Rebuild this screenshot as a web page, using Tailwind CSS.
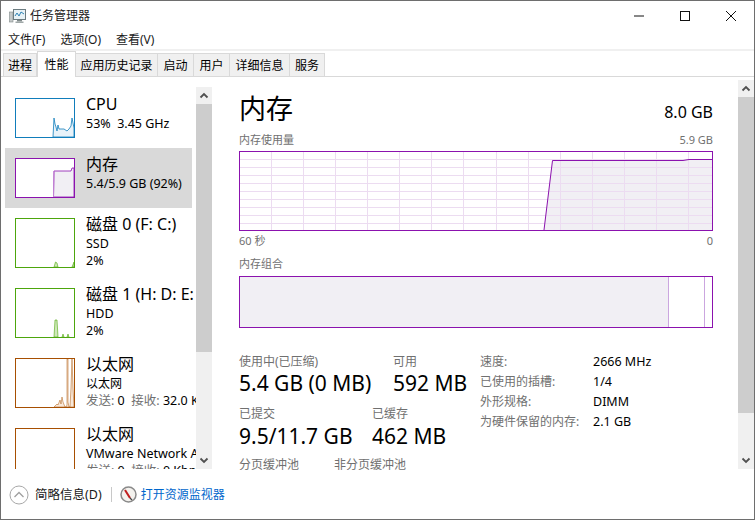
<!DOCTYPE html>
<html lang="zh-CN">
<head>
<meta charset="UTF-8">
<title>任务管理器</title>
<script src="https://cdn.jsdelivr.net/npm/@tailwindcss/browser@4"></script>
</head>
<body class="bg-white">
<div class="flex h-[520px] w-[755px] flex-col overflow-hidden border border-[#6e6e6e] bg-white font-['Noto_Sans','Noto_Sans_CJK_SC',sans-serif] text-[12px] leading-[16px] text-black">

  <!-- title bar -->
  <div class="flex h-[29px] shrink-0 items-center">
    <svg class="ml-[8px] mt-[1px]" width="17" height="15" viewBox="0 0 17 15">
      <rect x="0.5" y="3" width="3.5" height="10" fill="#c4c8c8" stroke="#808a8a" stroke-width="0.6"/>
      <rect x="4.5" y="0.5" width="12" height="10" fill="#e8f2f6" stroke="#6b7b80"/>
      <path d="M6 7l2-3 2 3 2-4 3 2" fill="none" stroke="#2f83b5"/>
      <rect x="8" y="11" width="5" height="1.5" fill="#808a8a"/>
      <rect x="6.5" y="12.5" width="8" height="1.5" fill="#a0a8a8"/>
    </svg>
    <span class="ml-[4px] text-[#222]">任务管理器</span>
    <div class="ml-auto flex items-center">
      <svg width="46" height="29" viewBox="0 0 46 29"><path d="M18 15h10" stroke="#111"/></svg>
      <svg width="46" height="29" viewBox="0 0 46 29"><rect x="18.5" y="10.5" width="9" height="9" fill="none" stroke="#111"/></svg>
      <svg width="46" height="29" viewBox="0 0 46 29"><path d="M18 10l10 10M28 10l-10 10" stroke="#111" fill="none"/></svg>
    </div>
  </div>

  <!-- menu -->
  <div class="flex h-[19px] shrink-0 items-center gap-[15px] pl-[7px] text-[#1a1a1a]">
    <span>文件(F)</span><span>选项(O)</span><span>查看(V)</span>
  </div>
  <div class="h-[2px] shrink-0 bg-[#f0f0f0]"></div>

  <!-- tabs -->
  <div class="flex h-[26px] shrink-0 items-end border-b border-[#d9d9d9] pl-[2px]">
    <div class="flex h-[23px] w-[34px] items-center justify-center border border-b-0 border-[#d9d9d9] bg-[#f0f0f0] pt-[2px]">进程</div>
    <div class="relative z-10 -mb-px flex h-[26px] w-[39px] items-center justify-center border border-b-0 border-[#d9d9d9] bg-white">性能</div>
    <div class="flex h-[23px] w-[82px] items-center justify-center border border-b-0 border-l-0 border-[#d9d9d9] bg-[#f0f0f0] pt-[2px]">应用历史记录</div>
    <div class="flex h-[23px] w-[36px] items-center justify-center border border-b-0 border-l-0 border-[#d9d9d9] bg-[#f0f0f0] pt-[2px]">启动</div>
    <div class="flex h-[23px] w-[36px] items-center justify-center border border-b-0 border-l-0 border-[#d9d9d9] bg-[#f0f0f0] pt-[2px]">用户</div>
    <div class="flex h-[23px] w-[60px] items-center justify-center border border-b-0 border-l-0 border-[#d9d9d9] bg-[#f0f0f0] pt-[2px]">详细信息</div>
    <div class="flex h-[23px] w-[35px] items-center justify-center border border-b-0 border-l-0 border-[#d9d9d9] bg-[#f0f0f0] pt-[2px]">服务</div>
  </div>

  <!-- body -->
  <div class="flex h-[392px] shrink-0">

    <!-- sidebar list -->
    <div class="h-full w-[195px] shrink-0 overflow-hidden pl-[4px] pt-[11px]">
      <div class="flex h-[60px] w-[187px] gap-[11px] pl-[10px] pt-[10px]">
        <svg class="shrink-0" width="60" height="40" viewBox="0 0 60 40">
          <path d="M38 39L39 20 40 26 41 29 42 33 43 27 44 31 47 31 49 31 52 33 54 31 56 28 57 20 58 25 59 30V39Z" fill="#e8f2f9" stroke="#117dbb" stroke-width="0.8"/>
          <rect x="0.5" y="0.5" width="59" height="39" fill="none" stroke="#117dbb"/>
        </svg>
        <div class="min-w-0 whitespace-nowrap">
          <div class="-mt-[5px] text-[16px] leading-[22px]">CPU</div>
          <div class="text-[12.5px] leading-[17px]">53%&nbsp; 3.45 GHz</div>
        </div>
      </div>
      <div class="flex h-[60px] w-[187px] gap-[11px] bg-[#d9d9d9] pl-[10px] pt-[10px]">
        <svg class="shrink-0" width="60" height="40" viewBox="0 0 60 40">
          <rect x="0.5" y="0.5" width="59" height="39" fill="#fff"/>
          <path d="M38.5 39L39 13H56L57 10H59V39Z" fill="#f1eff4" stroke="#8b12ae" stroke-width="0.8"/>
          <path d="M38.5 39L39 13" stroke="#c486d6" fill="none"/>
          <rect x="0.5" y="0.5" width="59" height="39" fill="none" stroke="#8b12ae"/>
        </svg>
        <div class="min-w-0 whitespace-nowrap">
          <div class="-mt-[5px] text-[16px] leading-[22px]">内存</div>
          <div class="text-[12.5px] leading-[17px]">5.4/5.9 GB (92%)</div>
        </div>
      </div>
      <div class="flex h-[70px] gap-[11px] pl-[10px] pt-[10px]">
        <svg class="shrink-0" width="60" height="50" viewBox="0 0 60 50">
          <path d="M39 49L40.5 44 42 45 43 49ZM57 49L59 44V49Z" fill="#cfe8b9" stroke="#4da60c" stroke-width="0.6"/>
          <rect x="0.5" y="0.5" width="59" height="49" fill="none" stroke="#4da60c"/>
        </svg>
        <div class="min-w-0 whitespace-nowrap">
          <div class="-mt-[5px] text-[16px] leading-[22px]">磁盘 0 (F: C:)</div>
          <div class="text-[12.5px] leading-[17px]">SSD</div>
          <div class="text-[12.5px] leading-[17px]">2%</div>
        </div>
      </div>
      <div class="flex h-[70px] gap-[11px] pl-[10px] pt-[10px]">
        <svg class="shrink-0" width="60" height="50" viewBox="0 0 60 50">
          <path d="M39 49L40 32H42L43 49ZM47 49L48 46 49 49ZM52 49L53 46 54 49Z" fill="#cfe8b9" stroke="#4da60c" stroke-width="0.6"/>
          <rect x="0.5" y="0.5" width="59" height="49" fill="none" stroke="#4da60c"/>
        </svg>
        <div class="min-w-0 whitespace-nowrap">
          <div class="-mt-[5px] text-[16px] leading-[22px]">磁盘 1 (H: D: E:</div>
          <div class="text-[12.5px] leading-[17px]">HDD</div>
          <div class="text-[12.5px] leading-[17px]">2%</div>
        </div>
      </div>
      <div class="flex h-[70px] gap-[11px] pl-[10px] pt-[10px]">
        <svg class="shrink-0" width="60" height="50" viewBox="0 0 60 50">
          <path d="M39 49L42 46 43 47 45 42 46 46 47 39 48 44 50 49H51L52 47 52 1H53V44L54 49H55L56 30 57 1 58 30 59 49Z" fill="#f8e8da" stroke="#b9702e" stroke-width="0.6"/>
          <rect x="0.5" y="0.5" width="59" height="49" fill="none" stroke="#a74f01"/>
        </svg>
        <div class="min-w-0 whitespace-nowrap">
          <div class="-mt-[5px] text-[16px] leading-[22px]">以太网</div>
          <div class="leading-[17px]">以太网</div>
          <div class="text-[12.5px] leading-[17px]"><span class="text-[#707070]">发送:</span> 0&nbsp; <span class="text-[#707070]">接收:</span> 32.0 Kbps</div>
        </div>
      </div>
      <div class="flex h-[70px] gap-[11px] pl-[10px] pt-[10px]">
        <svg class="shrink-0" width="60" height="50" viewBox="0 0 60 50">
          <rect x="0.5" y="0.5" width="59" height="49" fill="none" stroke="#a74f01"/>
        </svg>
        <div class="min-w-0 whitespace-nowrap">
          <div class="-mt-[5px] text-[16px] leading-[22px]">以太网</div>
          <div class="text-[12.5px] leading-[17px]">VMware Network Adapter</div>
          <div class="text-[12.5px] leading-[17px]"><span class="text-[#707070]">发送:</span> 0&nbsp; <span class="text-[#707070]">接收:</span> 0 Kbps</div>
        </div>
      </div>
    </div>

    <!-- sidebar scrollbar -->
    <div class="mt-[10px] flex h-[382px] w-[16px] shrink-0 flex-col bg-[#f0f0f0]">
      <svg class="shrink-0" width="16" height="17" viewBox="0 0 16 17"><path d="M4.5 10.5L8 7l3.5 3.5" fill="none" stroke="#505050" stroke-width="1.8"/></svg>
      <div class="h-[248px] shrink-0 bg-[#cdcdcd]"></div>
      <svg class="mt-auto shrink-0" width="16" height="17" viewBox="0 0 16 17"><path d="M4.5 6.5L8 10l3.5-3.5" fill="none" stroke="#505050" stroke-width="1.8"/></svg>
    </div>

    <!-- main pane -->
    <div class="h-full w-[526px] shrink-0 pl-[27px] pr-[25px]">
      <div class="flex h-[47px] items-end justify-between pb-[1px]">
        <span class="translate-y-[3px] text-[27px] leading-[34px]">内存</span>
        <span class="text-[16px] leading-[22px]">8.0 GB</span>
      </div>
      <div class="mt-[8px] flex h-[16px] justify-between text-[11px] text-[#707070]">
        <span>内存使用量</span><span>5.9 GB</span>
      </div>
      <svg class="mt-[3px] block" width="474" height="80" viewBox="0 0 474 80">
        <path d="M305 79L313.5 9H444L450 8H473V79Z" fill="#f1eff4"/>
        <g stroke="#ecdcf1" fill="none">
          <path d="M32.5 0V80M64.5 0V80M96.5 0V80M128.5 0V80M160.5 0V80M192.5 0V80M224.5 0V80M257.5 0V80M289.5 0V80M321.5 0V80M353.5 0V80M385.5 0V80M417.5 0V80M449.5 0V80"/>
          <path d="M0 8.5H474M0 16.5H474M0 24.5H474M0 32.5H474M0 40.5H474M0 48.5H474M0 56.5H474M0 64.5H474M0 72.5H474"/>
        </g>
        <path d="M305 79L313.5 9.5H444L450 8.5H473" fill="none" stroke="#8b12ae" stroke-width="1"/>
        <rect x="0.5" y="0.5" width="473" height="79" fill="none" stroke="#8b12ae"/>
      </svg>
      <div class="mt-[1px] flex h-[18px] items-center justify-between text-[11px] text-[#707070]">
        <span>60 秒</span><span>0</span>
      </div>
      <div class="mt-[6px] h-[16px] text-[11px] text-[#707070]">内存组合</div>
      <div class="mt-[4px] flex h-[52px] w-[474px] border border-[#8b12ae]">
        <div class="w-[429px] border-r border-[#cba6df] bg-[#f1eff4]"></div>
        <div class="w-[36px] border-r border-[#cba6df]"></div>
      </div>
      <div class="mt-[26px] flex">
        <div class="w-[241px] shrink-0">
          <div class="flex">
            <div class="w-[154px] shrink-0">
              <div class="h-[15px] text-[#707070]">使用中(已压缩)</div>
              <div class="h-[28px] text-[21px] leading-[28px]">5.4 GB (0 MB)</div>
            </div>
            <div>
              <div class="h-[15px] text-[#707070]">可用</div>
              <div class="h-[28px] text-[21px] leading-[28px]">592 MB</div>
            </div>
          </div>
          <div class="mt-[9px] flex">
            <div class="w-[133px] shrink-0">
              <div class="h-[16px] text-[#707070]">已提交</div>
              <div class="h-[28px] text-[21px] leading-[28px]">9.5/11.7 GB</div>
            </div>
            <div>
              <div class="h-[16px] text-[#707070]">已缓存</div>
              <div class="h-[28px] text-[21px] leading-[28px]">462 MB</div>
            </div>
          </div>
          <div class="mt-[7px] flex h-[16px] text-[#707070]">
            <div class="w-[95px] shrink-0">分页缓冲池</div>
            <div>非分页缓冲池</div>
          </div>
        </div>
        <div class="grid grid-cols-[113px_auto] content-start auto-rows-[20px]">
          <div class="text-[#707070]">速度:</div><div class="text-[12.5px]">2666 MHz</div>
          <div class="text-[#707070]">已使用的插槽:</div><div class="text-[12.5px]">1/4</div>
          <div class="text-[#707070]">外形规格:</div><div class="text-[12.5px]">DIMM</div>
          <div class="text-[#707070]">为硬件保留的内存:</div><div class="text-[12.5px]">2.1 GB</div>
        </div>
      </div>
    </div>

    <!-- main scrollbar -->
    <div class="mt-[3px] flex h-[389px] w-[16px] shrink-0 flex-col bg-[#f0f0f0]">
      <svg class="shrink-0" width="16" height="17" viewBox="0 0 16 17"><path d="M4.5 10.5L8 7l3.5 3.5" fill="none" stroke="#505050" stroke-width="1.8"/></svg>
      <div class="h-[316px] shrink-0 bg-[#cdcdcd]"></div>
      <svg class="mt-auto shrink-0" width="16" height="17" viewBox="0 0 16 17"><path d="M4.5 6.5L8 10l3.5-3.5" fill="none" stroke="#505050" stroke-width="1.8"/></svg>
    </div>
  </div>

  <!-- footer -->
  <div class="flex flex-1 items-center pl-[8px] pt-[1px]">
    <svg width="20" height="20" viewBox="0 0 20 20">
      <circle cx="10" cy="10" r="9" fill="#fff" stroke="#a8a8a8"/>
      <path d="M5.5 12L10 7.5l4.5 4.5" fill="none" stroke="#a0a0a0" stroke-width="1.3"/>
    </svg>
    <span class="ml-[6px] text-[12.5px] text-[#1a1a1a]">简略信息(D)</span>
    <div class="ml-[9px] h-[15px] w-px bg-[#c8c8c8]"></div>
    <svg class="ml-[8px]" width="17" height="17" viewBox="0 0 17 17">
      <circle cx="8.5" cy="8.5" r="7.5" fill="#f4f2ee" stroke="#8a8a8a" stroke-width="1.5"/>
      <path d="M5 4l5 8" stroke="#c02020" stroke-width="2"/>
      <path d="M10 12l2 2" stroke="#444" stroke-width="1.2"/>
    </svg>
    <span class="ml-[4px] text-[#0066cc]">打开资源监视器</span>
  </div>
</div>
</body>
</html>
